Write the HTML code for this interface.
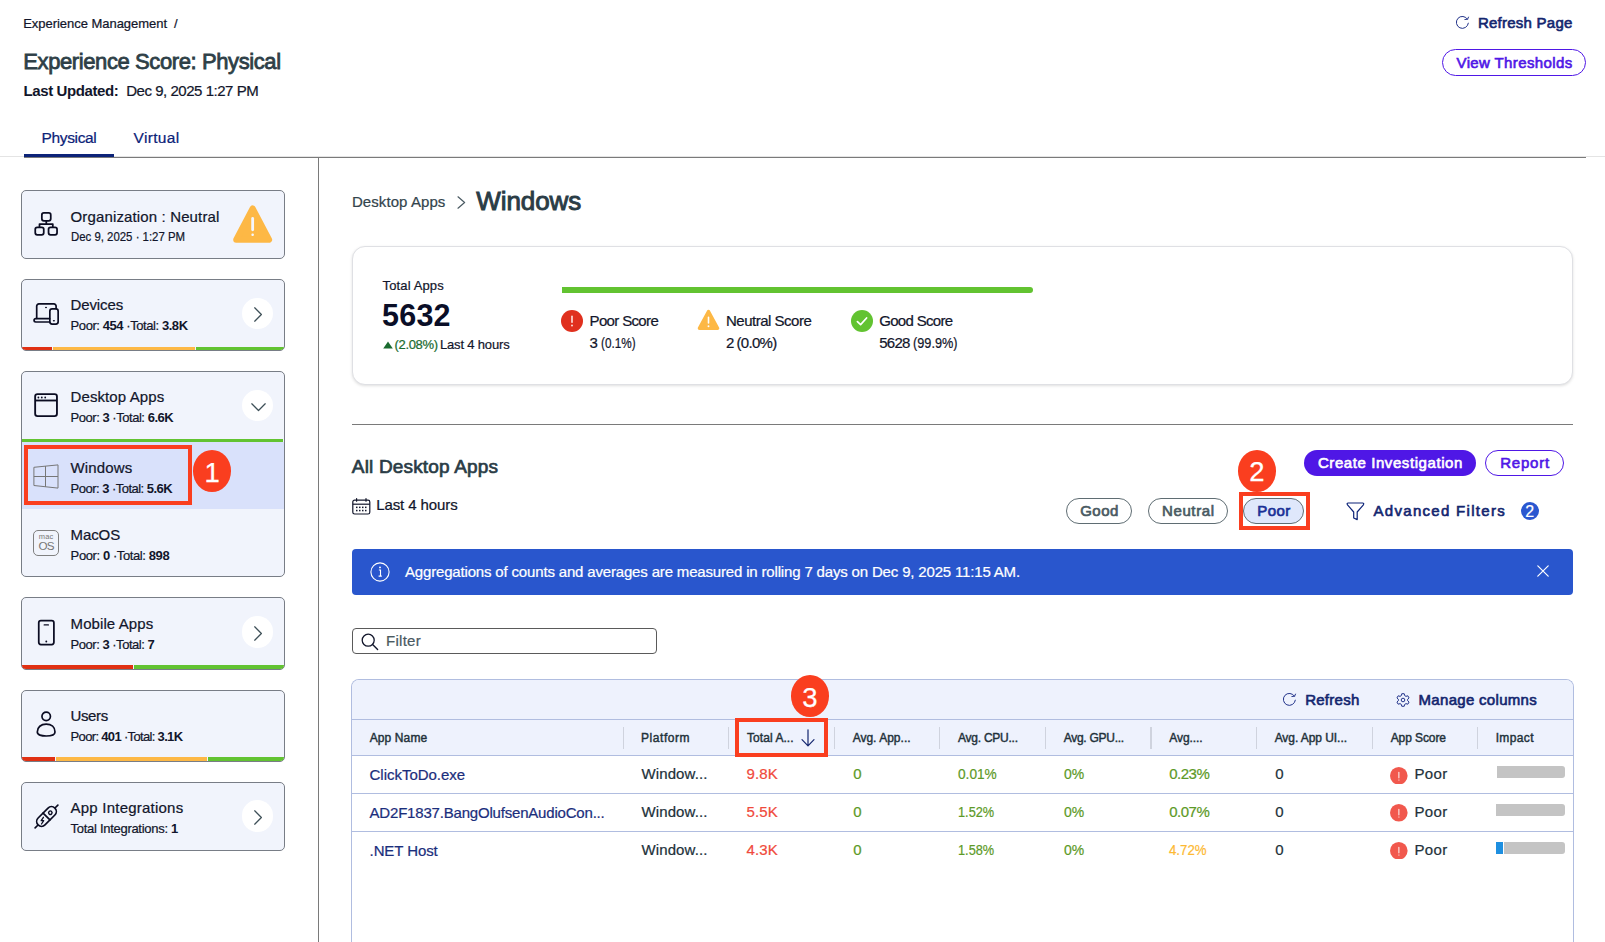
<!DOCTYPE html>
<html lang="en"><head><meta charset="utf-8"><title>Experience Score: Physical</title>
<style>
html,body{margin:0;padding:0;}
html{width:1605px;height:942px;overflow:hidden;}
body{width:1605px;height:942px;position:relative;overflow:hidden;background:#fff;font-family:"Liberation Sans", sans-serif;}
.a{position:absolute;box-sizing:border-box;}
.t{position:absolute;white-space:nowrap;line-height:1;margin:0;padding:0;}
.t b{font-weight:700;-webkit-text-stroke:0;}
</style></head><body>
<div class="a" style="left:0px;top:156px;width:1605px;height:1px;background:#e4e4e4;"></div>
<div class="a" style="left:24px;top:157px;width:1562px;height:1px;background:#7a7a7a;"></div>
<div class="a" style="left:24px;top:154px;width:90px;height:3px;background:#0c2378;"></div>
<div class="a" style="left:318px;top:157px;width:1px;height:785px;background:#7a7a7a;"></div>
<svg class="a" style="left:1455px;top:15px;" width="15" height="15" viewBox="0 0 15 15"><path d="M12.5 4.2A6 6 0 1 0 13.35 8.2" fill="none" stroke="#22338a" stroke-width="1" stroke-linecap="round"/><path d="M13.5 2.1L12.6 4.2L9.9 4.5" fill="none" stroke="#22338a" stroke-width="1" stroke-linecap="round" stroke-linejoin="round"/></svg>
<div class="a" style="left:1442px;top:49px;width:144px;height:27px;background:#fff;border:1.5px solid #4f17e6;border-radius:14px;"></div>
<div class="a" style="left:21px;top:190px;width:264px;height:69px;background:#f1f4fc;border:1px solid #787d86;border-radius:5px;overflow:hidden"></div>
<svg class="a" style="left:34px;top:212px;" width="25" height="24" viewBox="0 0 25 24"><g fill="none" stroke="#0b0c22" stroke-width="1.75" stroke-linejoin="round"><rect x="7.85" y="0.95" width="8.9" height="7.9" rx="2"/><rect x="1.25" y="15.35" width="8.5" height="7.5" rx="2"/><rect x="14.55" y="15.35" width="8.5" height="7.5" rx="2"/><path d="M12.3 8.9v3.1M5.5 15.3v-3.3h13.3v3.3"/></g></svg>
<svg class="a" style="left:233px;top:205px;" width="40" height="38.5" viewBox="0 0 40 38.5"><path d="M19.65 3.5L36.1 34.75H3.2Z" fill="#fdb845" stroke="#fdb845" stroke-width="6" stroke-linejoin="round"/><rect x="18.25" y="12" width="2.8" height="14.2" rx="1.4" fill="#f4f6fd"/><rect x="18.4" y="28.5" width="2.5" height="2.5" rx="1" fill="#f4f6fd"/></svg>
<div class="a" style="left:21px;top:279px;width:264px;height:72px;background:#f1f4fc;border:1px solid #787d86;border-radius:5px;overflow:hidden"><i style="position:absolute;left:0px;bottom:0;width:30px;height:3px;background:#e03013"></i><i style="position:absolute;left:31px;bottom:0;width:142px;height:3px;background:#fdb845"></i><i style="position:absolute;left:174px;bottom:0;width:88px;height:3px;background:#62c331"></i></div>
<svg class="a" style="left:33px;top:303px;" width="27" height="23" viewBox="0 0 27 23"><g fill="none" stroke="#0b0c22" stroke-width="1.7" stroke-linejoin="round" stroke-linecap="round"><path d="M3.7 15.3V3.1a2.2 2.2 0 0 1 2.2-2.2H20.9a2.2 2.2 0 0 1 2.2 2.2V5.4"/><path d="M16.6 15.7H2.7a1.65 1.65 0 0 0 0 3.3H16.6"/><rect x="16.85" y="5.85" width="8.3" height="15.2" rx="2.3"/></g><ellipse cx="13" cy="4.5" rx="1" ry="0.7" fill="#0b0c22"/><ellipse cx="20.9" cy="17.7" rx="1.1" ry="0.8" fill="#0b0c22"/></svg>
<div class="a" style="left:241.8px;top:297.8px;width:31.4px;height:31.4px;background:#fff;border-radius:16px;"></div>
<svg class="a" style="left:254px;top:307.0px;" width="9" height="15.4" viewBox="0 0 9 15.4"><path d="M0.7 0.8L7.4 7.5L0.7 14.2" fill="none" stroke="#3d4f57" stroke-width="1.25" stroke-linecap="round" stroke-linejoin="round"/></svg>
<div class="a" style="left:21px;top:371px;width:264px;height:206px;background:#f1f4fc;border:1px solid #787d86;border-radius:5px;overflow:hidden"></div>
<svg class="a" style="left:34px;top:393px;" width="25" height="25" viewBox="0 0 25 25"><g fill="none" stroke="#0b0c22" stroke-width="1.85" stroke-linejoin="round"><rect x="1.15" y="1.05" width="21.8" height="22.1" rx="2.4"/><path d="M1.15 7.5h21.8"/></g><circle cx="4.4" cy="4.5" r="0.9" fill="#0b0c22"/><circle cx="7.8" cy="4.5" r="0.9" fill="#0b0c22"/><circle cx="11.2" cy="4.5" r="0.9" fill="#0b0c22"/></svg>
<div class="a" style="left:241.8px;top:389.8px;width:31.4px;height:31.4px;background:#fff;border-radius:16px;"></div>
<svg class="a" style="left:250.5px;top:402.5px;" width="15" height="9" viewBox="0 0 15 9"><path d="M0.8 0.8L7.5 7.5L14.2 0.8" fill="none" stroke="#3d4f57" stroke-width="1.25" stroke-linecap="round" stroke-linejoin="round"/></svg>
<div class="a" style="left:22px;top:439px;width:261px;height:3px;background:#62c331;"></div>
<div class="a" style="left:22px;top:442px;width:262px;height:67px;background:#d9e1fb;"></div>
<svg class="a" style="left:33px;top:464px;" width="27" height="26" viewBox="0 0 27 26"><g fill="none" stroke="#777" stroke-width="1" stroke-linejoin="miter"><path d="M0.9 3.3L25 0.9V24.1L0.9 21.5Z"/><path d="M12.5 2.1V22.8M0.9 12.5H25"/></g></svg>
<div class="a" style="left:33px;top:530px;width:26px;height:26px;border:1px solid #808080;border-radius:5px;"></div>
<div class="a" style="left:21px;top:597px;width:264px;height:73px;background:#f1f4fc;border:1px solid #787d86;border-radius:5px;overflow:hidden"><i style="position:absolute;left:0px;bottom:0;width:111px;height:4px;background:#e03013"></i><i style="position:absolute;left:112px;bottom:0;width:150px;height:4px;background:#62c331"></i></div>
<svg class="a" style="left:37px;top:618.5px;" width="19" height="27" viewBox="0 0 19 27"><g fill="none" stroke="#0b0c22" stroke-width="1.75" stroke-linejoin="round" stroke-linecap="round"><rect x="1.75" y="1.6" width="15.15" height="23.9" rx="2.2"/><path d="M7.2 5.9h4.2" stroke-width="1.3"/></g><circle cx="9.3" cy="22.5" r="0.95" fill="#0b0c22"/></svg>
<div class="a" style="left:241.8px;top:616.3px;width:31.4px;height:31.4px;background:#fff;border-radius:16px;"></div>
<svg class="a" style="left:254px;top:625.5px;" width="9" height="15.4" viewBox="0 0 9 15.4"><path d="M0.7 0.8L7.4 7.5L0.7 14.2" fill="none" stroke="#3d4f57" stroke-width="1.25" stroke-linecap="round" stroke-linejoin="round"/></svg>
<div class="a" style="left:21px;top:690px;width:264px;height:72px;background:#f1f4fc;border:1px solid #787d86;border-radius:5px;overflow:hidden"><i style="position:absolute;left:0px;bottom:0;width:33px;height:4px;background:#e03013"></i><i style="position:absolute;left:34px;bottom:0;width:151px;height:4px;background:#fdb845"></i><i style="position:absolute;left:186px;bottom:0;width:76px;height:4px;background:#62c331"></i></div>
<svg class="a" style="left:35px;top:711px;" width="22" height="27" viewBox="0 0 22 27"><g fill="none" stroke="#0b0c22" stroke-width="1.7" stroke-linejoin="round"><circle cx="11.2" cy="5.3" r="4.25"/><path d="M2.3 21C2.3 16 6 13.2 11.2 13.2C16.4 13.2 20 16 20 21C20 24 16 25 11.2 25C6.4 25 2.3 24 2.3 21Z"/></g></svg>
<div class="a" style="left:21px;top:782px;width:264px;height:69px;background:#f1f4fc;border:1px solid #787d86;border-radius:5px;overflow:hidden"></div>
<svg class="a" style="left:32.8px;top:802.5px;overflow:visible;" width="27" height="27" viewBox="0 0 27 27"><g transform="rotate(-45 13.5 13.5)" fill="none" stroke="#0b0c22" stroke-width="1.7" stroke-linecap="round" stroke-linejoin="round"><rect x="1.65" y="8.65" width="23.7" height="9.7" rx="4.85"/><path d="M26.2 13.5h3.4M0.8 13.5H-2.6M13.5 8.65v9.7" /><circle cx="18.9" cy="13.5" r="1.7" stroke-width="1.4"/></g><path d="M10.4 14.3l-2.2 3.3h2.5l-2.2 3.4" fill="none" stroke="#0b0c22" stroke-width="1.3" stroke-linejoin="round" stroke-linecap="round"/></svg>
<div class="a" style="left:241.8px;top:800.3px;width:31.4px;height:31.4px;background:#fff;border-radius:16px;"></div>
<svg class="a" style="left:254px;top:809.5px;" width="9" height="15.4" viewBox="0 0 9 15.4"><path d="M0.7 0.8L7.4 7.5L0.7 14.2" fill="none" stroke="#3d4f57" stroke-width="1.25" stroke-linecap="round" stroke-linejoin="round"/></svg>
<svg class="a" style="left:457px;top:195.5px;" width="9" height="13" viewBox="0 0 9 13"><path d="M1 0.8L7.6 6.5L1 12.2" fill="none" stroke="#4a5a62" stroke-width="1.2" stroke-linecap="round" stroke-linejoin="round"/></svg>
<div class="a" style="left:352px;top:246px;width:1221px;height:139px;background:#fff;border:1px solid #dfe0e4;border-radius:13px;box-shadow:0 1px 3px rgba(0,0,0,.13);"></div>
<svg class="a" style="left:383px;top:340.5px;" width="10" height="8" viewBox="0 0 10 8"><path d="M5 0.6L9.8 7.4H0.2Z" fill="#1a6b2f"/></svg>
<div class="a" style="left:562px;top:287px;width:471px;height:6px;background:#62c331;border-radius:0 3px 3px 0;"></div>
<svg class="a" style="left:561px;top:310px;" width="22" height="22" viewBox="0 0 22 22"><circle cx="11" cy="11" r="11" fill="#e0301e"/><rect x="10.2" y="5.6" width="1.6" height="7.4" rx="0.8" fill="#fde4e0"/><circle cx="11" cy="15.5" r="0.95" fill="#fde4e0"/></svg>
<svg class="a" style="left:696.8px;top:309.3px;" width="23" height="22" viewBox="0 0 23 22"><path d="M11.5 2.6L20.6 19.2H2.4Z" fill="#fdb845" stroke="#fdb845" stroke-width="3.4" stroke-linejoin="round"/><rect x="10.7" y="7.6" width="1.6" height="7.2" rx="0.8" fill="#fff"/><circle cx="11.5" cy="17.2" r="0.95" fill="#fff"/></svg>
<svg class="a" style="left:851px;top:310px;" width="22" height="22" viewBox="0 0 22 22"><circle cx="11" cy="11" r="11" fill="#62c331"/><path d="M6.4 11.6L9.6 14.6L15.6 8" fill="none" stroke="#fff" stroke-width="1.7" stroke-linecap="round" stroke-linejoin="round"/></svg>
<div class="a" style="left:352px;top:424px;width:1221px;height:1px;background:#7a7a7a;"></div>
<div class="a" style="left:1304px;top:450px;width:172px;height:26px;background:#4f17e6;border-radius:13px;"></div>
<div class="a" style="left:1485px;top:450px;width:79px;height:26px;background:#fff;border:1.5px solid #4f17e6;border-radius:13px;"></div>
<svg class="a" style="left:352px;top:497.5px;" width="19" height="17" viewBox="0 0 19 17"><g fill="none" stroke="#12162b" stroke-width="1.2" stroke-linejoin="round"><rect x="0.8" y="2.2" width="17" height="13.8" rx="1.8"/><path d="M0.8 6.2h17"/><path d="M4.6 0.6v2.6M14 0.6v2.6" stroke-linecap="round"/></g><g fill="#12162b"><rect x="4" y="8.6" width="1.5" height="1.5"/><rect x="7" y="8.6" width="1.5" height="1.5"/><rect x="10" y="8.6" width="1.5" height="1.5"/><rect x="13" y="8.6" width="1.5" height="1.5"/><rect x="4" y="11.8" width="1.5" height="1.5"/><rect x="7" y="11.8" width="1.5" height="1.5"/><rect x="10" y="11.8" width="1.5" height="1.5"/><rect x="13" y="11.8" width="1.5" height="1.5"/></g></svg>
<div class="a" style="left:1066px;top:498px;width:66px;height:26px;background:#fff;border:1px solid #5f6d73;border-radius:13px;"></div>
<div class="a" style="left:1148px;top:498px;width:80px;height:26px;background:#fff;border:1px solid #5f6d73;border-radius:13px;"></div>
<div class="a" style="left:1243px;top:498px;width:61px;height:26px;background:#dfe7fb;border:1px solid #5f6d73;border-radius:13px;"></div>
<svg class="a" style="left:1345.5px;top:501.5px;" width="19" height="19" viewBox="0 0 19 19"><path d="M2.2 1H16.6Q18.3 1 17.4 2.8L11.2 10V17.6L7.7 16V10L1.5 2.8Q0.5 1 2.2 1Z" fill="none" stroke="#0c2378" stroke-width="1.2" stroke-linejoin="round"/></svg>
<div class="a" style="left:1521px;top:502px;width:18px;height:18px;background:#2a57d0;border-radius:9px;"></div>
<div class="a" style="left:352px;top:549px;width:1221px;height:46px;background:#2956cd;border-radius:4px;"></div>
<svg class="a" style="left:369.5px;top:562px;" width="20" height="20" viewBox="0 0 20 20"><circle cx="10" cy="10" r="9.1" fill="none" stroke="#fff" stroke-width="1.1"/><path d="M8.9 8h1.6v6M8.6 14.1h3.2" fill="none" stroke="#fff" stroke-width="1.1"/><circle cx="10" cy="5.4" r="0.95" fill="#fff"/></svg>
<svg class="a" style="left:1537px;top:565px;" width="12" height="12" viewBox="0 0 12 12"><path d="M0.8 0.8L11.2 11.2M11.2 0.8L0.8 11.2" stroke="#fff" stroke-width="1.2" stroke-linecap="round"/></svg>
<div class="a" style="left:352px;top:628px;width:305px;height:26px;background:#fff;border:1px solid #5a5a5a;border-radius:4px;"></div>
<svg class="a" style="left:361px;top:632.5px;" width="18" height="18" viewBox="0 0 18 18"><circle cx="7.2" cy="7.2" r="6" fill="none" stroke="#12162b" stroke-width="1.3"/><path d="M11.6 11.6L16.6 16.4" stroke="#12162b" stroke-width="1.4" stroke-linecap="round"/></svg>
<div class="a" style="left:351px;top:679px;width:1223px;height:263px;background:#fff;border:1px solid #b0bde0;border-radius:8px 8px 0 0;border-bottom:none;"></div>
<div class="a" style="left:352px;top:680px;width:1221px;height:76px;background:#eef2fd;border-radius:7px 7px 0 0;"></div>
<div class="a" style="left:352px;top:719px;width:1221px;height:1px;background:#b0bde0;"></div>
<div class="a" style="left:352px;top:755px;width:1221px;height:1px;background:#b0bde0;"></div>
<div class="a" style="left:352px;top:793px;width:1221px;height:1px;background:#b0bde0;"></div>
<div class="a" style="left:352px;top:831px;width:1221px;height:1px;background:#b0bde0;"></div>
<div class="a" style="left:623px;top:727px;width:1px;height:22px;background:#cfd3de;"></div>
<div class="a" style="left:728px;top:727px;width:1px;height:22px;background:#cfd3de;"></div>
<div class="a" style="left:834px;top:727px;width:1px;height:22px;background:#cfd3de;"></div>
<div class="a" style="left:939px;top:727px;width:1px;height:22px;background:#cfd3de;"></div>
<div class="a" style="left:1045px;top:727px;width:1px;height:22px;background:#cfd3de;"></div>
<div class="a" style="left:1150px;top:727px;width:2px;height:22px;background:#cfd3de;"></div>
<div class="a" style="left:1256px;top:727px;width:1px;height:22px;background:#cfd3de;"></div>
<div class="a" style="left:1372px;top:727px;width:1px;height:22px;background:#cfd3de;"></div>
<div class="a" style="left:1477px;top:727px;width:1px;height:22px;background:#cfd3de;"></div>
<svg class="a" style="left:1282.1px;top:692px;" width="15" height="15" viewBox="0 0 15 15"><path d="M12.5 4.2A6 6 0 1 0 13.35 8.2" fill="none" stroke="#22338a" stroke-width="1" stroke-linecap="round"/><path d="M13.5 2.1L12.6 4.2L9.9 4.5" fill="none" stroke="#22338a" stroke-width="1" stroke-linecap="round" stroke-linejoin="round"/></svg>
<svg class="a" style="left:1395.5px;top:692.5px;" width="14" height="14" viewBox="0 0 14 14"><g fill="none" stroke="#22338a" stroke-width="1" stroke-linejoin="round"><path d="M8.68 2.61L8.22 0.72L5.78 0.72L5.32 2.61L4.04 3.35L2.17 2.80L0.95 4.92L2.36 6.26L2.36 7.74L0.95 9.08L2.17 11.20L4.04 10.65L5.32 11.39L5.78 13.28L8.22 13.28L8.68 11.39L9.96 10.65L11.83 11.20L13.05 9.08L11.64 7.74L11.64 6.26L13.05 4.92L11.83 2.80L9.96 3.35Z"/><circle cx="7" cy="7" r="1.8"/></g></svg>
<svg class="a" style="left:801px;top:729px;" width="14" height="18" viewBox="0 0 14 18"><path d="M7 0.8V16.6M1 10.6L7 16.8L13 10.6" fill="none" stroke="#13266f" stroke-width="1.2" stroke-linecap="round" stroke-linejoin="round"/></svg>
<svg class="a" style="left:1390px;top:766.7px;" width="17.6" height="17.6" viewBox="0 0 17.6 17.6"><circle cx="8.8" cy="8.8" r="8.8" fill="#f1584d"/><rect x="8.2" y="4.8" width="1.3" height="6.6" rx="0.65" fill="#fff" fill-opacity="0.75"/><rect x="8.1" y="12.4" width="1.5" height="1.1" rx="0.5" fill="#fff" fill-opacity="0.75"/></svg>
<div class="a" style="left:1497px;top:766px;width:68px;height:12px;background:#c4c4c4;border-radius:0 3px 3px 0;"></div>
<svg class="a" style="left:1390px;top:804.1px;" width="17.6" height="17.6" viewBox="0 0 17.6 17.6"><circle cx="8.8" cy="8.8" r="8.8" fill="#f1584d"/><rect x="8.2" y="4.8" width="1.3" height="6.6" rx="0.65" fill="#fff" fill-opacity="0.75"/><rect x="8.1" y="12.4" width="1.5" height="1.1" rx="0.5" fill="#fff" fill-opacity="0.75"/></svg>
<div class="a" style="left:1496px;top:804px;width:69px;height:12px;background:#c4c4c4;border-radius:0 3px 3px 0;"></div>
<svg class="a" style="left:1390px;top:841.9000000000001px;" width="17.6" height="17.6" viewBox="0 0 17.6 17.6"><circle cx="8.8" cy="8.8" r="8.8" fill="#f1584d"/><rect x="8.2" y="4.8" width="1.3" height="6.6" rx="0.65" fill="#fff" fill-opacity="0.75"/><rect x="8.1" y="12.4" width="1.5" height="1.1" rx="0.5" fill="#fff" fill-opacity="0.75"/></svg>
<div class="a" style="left:1496px;top:842px;width:69px;height:12px;background:#c4c4c4;border-radius:0 3px 3px 0;"></div>
<div class="a" style="left:1496px;top:842px;width:7px;height:12px;background:#1e8fe0;"></div>
<div class="a" style="left:1503px;top:842px;width:1px;height:12px;background:#fff;"></div>
<span class="t" style="left:23.21px;top:17.00px;font-size:13px;font-weight:400;-webkit-text-stroke:0.22px #12162b;color:#12162b;letter-spacing:-0.035px;">Experience Management</span>
<span class="t" style="left:174.11px;top:17.00px;font-size:13px;font-weight:400;-webkit-text-stroke:0.22px #12162b;color:#12162b;">/</span>
<span class="t" style="left:23.34px;top:51.38px;font-size:22px;font-weight:400;-webkit-text-stroke:0.79px #2e3f47;color:#2e3f47;letter-spacing:-0.401px;">Experience Score: Physical</span>
<span class="t" style="left:23.55px;top:83.30px;font-size:15px;font-weight:700;color:#12162b;letter-spacing:-0.401px;">Last Updated:</span>
<span class="t" style="left:126.15px;top:83.30px;font-size:15px;font-weight:400;-webkit-text-stroke:0.22px #12162b;color:#12162b;letter-spacing:-0.462px;">Dec 9, 2025 1:27 PM</span>
<span class="t" style="left:41.53px;top:129.88px;font-size:15.5px;font-weight:400;-webkit-text-stroke:0.22px #0c2378;color:#0c2378;letter-spacing:-0.354px;">Physical</span>
<span class="t" style="left:133.53px;top:129.88px;font-size:15.5px;font-weight:400;-webkit-text-stroke:0.22px #0c2378;color:#0c2378;letter-spacing:0.331px;">Virtual</span>
<span class="t" style="left:1477.95px;top:15.30px;font-size:15px;font-weight:400;-webkit-text-stroke:0.63px #13266f;color:#13266f;letter-spacing:0.242px;">Refresh Page</span>
<span class="t" style="left:1456.55px;top:55.30px;font-size:15px;font-weight:400;-webkit-text-stroke:0.63px #4f17e6;color:#4f17e6;letter-spacing:0.375px;">View Thresholds</span>
<span class="t" style="left:70.55px;top:209.30px;font-size:15px;font-weight:400;-webkit-text-stroke:0.22px #12162b;color:#12162b;letter-spacing:0.138px;">Organization : Neutral</span>
<span class="t" style="left:70.61px;top:230.00px;font-size:13px;font-weight:400;-webkit-text-stroke:0.22px #12162b;color:#12162b;transform:scaleX(0.8767);transform-origin:0 0;">Dec 9, 2025 &#183; 1:27 PM</span>
<span class="t" style="left:70.55px;top:297.30px;font-size:15px;font-weight:400;-webkit-text-stroke:0.22px #12162b;color:#12162b;letter-spacing:-0.127px;">Devices</span>
<span class="t" style="left:70.61px;top:319.00px;font-size:13px;font-weight:400;-webkit-text-stroke:0.22px #12162b;color:#12162b;letter-spacing:-0.431px;">Poor: <b>454</b> &#183;Total: <b>3.8K</b></span>
<span class="t" style="left:70.55px;top:389.10px;font-size:15px;font-weight:400;-webkit-text-stroke:0.22px #12162b;color:#12162b;letter-spacing:0.094px;">Desktop Apps</span>
<span class="t" style="left:70.61px;top:411.00px;font-size:13px;font-weight:400;-webkit-text-stroke:0.22px #12162b;color:#12162b;letter-spacing:-0.472px;">Poor: <b>3</b> &#183;Total: <b>6.6K</b></span>
<span class="t" style="left:70.55px;top:460.30px;font-size:15px;font-weight:400;-webkit-text-stroke:0.22px #12162b;color:#12162b;letter-spacing:0.157px;">Windows</span>
<span class="t" style="left:70.61px;top:482.00px;font-size:13px;font-weight:400;-webkit-text-stroke:0.22px #12162b;color:#12162b;letter-spacing:-0.525px;">Poor: <b>3</b> &#183;Total: <b>5.6K</b></span>
<span class="t" style="left:38.77px;top:533.25px;font-size:7.5px;font-weight:400;color:#777;letter-spacing:0.214px;">mac</span>
<span class="t" style="left:38.45px;top:540.10px;font-size:11.7px;font-weight:400;color:#777;letter-spacing:-0.755px;">OS</span>
<span class="t" style="left:70.55px;top:526.90px;font-size:15px;font-weight:400;-webkit-text-stroke:0.22px #12162b;color:#12162b;letter-spacing:-0.104px;">MacOS</span>
<span class="t" style="left:70.61px;top:549.00px;font-size:13px;font-weight:400;-webkit-text-stroke:0.22px #12162b;color:#12162b;letter-spacing:-0.401px;">Poor: <b>0</b> &#183;Total: <b>898</b></span>
<span class="t" style="left:70.55px;top:616.30px;font-size:15px;font-weight:400;-webkit-text-stroke:0.22px #12162b;color:#12162b;letter-spacing:0.088px;">Mobile Apps</span>
<span class="t" style="left:70.61px;top:638.00px;font-size:13px;font-weight:400;-webkit-text-stroke:0.22px #12162b;color:#12162b;letter-spacing:-0.484px;">Poor: <b>3</b> &#183;Total: <b>7</b></span>
<span class="t" style="left:70.55px;top:708.30px;font-size:15px;font-weight:400;-webkit-text-stroke:0.22px #12162b;color:#12162b;letter-spacing:-0.393px;">Users</span>
<span class="t" style="left:70.61px;top:730.00px;font-size:13px;font-weight:400;-webkit-text-stroke:0.22px #12162b;color:#12162b;letter-spacing:-0.669px;">Poor: <b>401</b> &#183;Total: <b>3.1K</b></span>
<span class="t" style="left:70.55px;top:800.30px;font-size:15px;font-weight:400;-webkit-text-stroke:0.22px #12162b;color:#12162b;letter-spacing:0.223px;">App Integrations</span>
<span class="t" style="left:70.61px;top:822.00px;font-size:13px;font-weight:400;-webkit-text-stroke:0.22px #12162b;color:#12162b;letter-spacing:-0.291px;">Total Integrations: <b>1</b></span>
<span class="t" style="left:351.95px;top:194.30px;font-size:15px;font-weight:400;-webkit-text-stroke:0.22px #33444c;color:#33444c;letter-spacing:0.076px;">Desktop Apps</span>
<span class="t" style="left:476.22px;top:187.59px;font-size:26px;font-weight:400;-webkit-text-stroke:0.94px #2a3c46;color:#2a3c46;letter-spacing:-0.067px;">Windows</span>
<span class="t" style="left:382.61px;top:279.00px;font-size:13px;font-weight:400;-webkit-text-stroke:0.22px #12162b;color:#12162b;letter-spacing:0.116px;">Total Apps</span>
<span class="t" style="left:382.08px;top:299.78px;font-size:30.5px;font-weight:700;color:#0a0e27;letter-spacing:0.194px;">5632</span>
<span class="t" style="left:394.61px;top:337.60px;font-size:13px;font-weight:400;-webkit-text-stroke:0.22px #1a6b2f;color:#1a6b2f;letter-spacing:-0.349px;">(2.08%)</span>
<span class="t" style="left:440.01px;top:337.60px;font-size:13px;font-weight:400;-webkit-text-stroke:0.22px #12162b;color:#12162b;letter-spacing:-0.173px;">Last 4 hours</span>
<span class="t" style="left:589.55px;top:313.30px;font-size:15px;font-weight:400;-webkit-text-stroke:0.22px #12162b;color:#12162b;letter-spacing:-0.650px;">Poor Score</span>
<span class="t" style="left:589.55px;top:335.30px;font-size:15px;font-weight:400;-webkit-text-stroke:0.22px #12162b;color:#12162b;">3</span>
<span class="t" style="left:600.55px;top:335.30px;font-size:15px;font-weight:400;-webkit-text-stroke:0.22px #12162b;color:#12162b;transform:scaleX(0.7830);transform-origin:0 0;">(0.1%)</span>
<span class="t" style="left:725.95px;top:313.30px;font-size:15px;font-weight:400;-webkit-text-stroke:0.22px #12162b;color:#12162b;letter-spacing:-0.493px;">Neutral Score</span>
<span class="t" style="left:725.95px;top:335.30px;font-size:15px;font-weight:400;-webkit-text-stroke:0.22px #12162b;color:#12162b;">2</span>
<span class="t" style="left:736.55px;top:335.30px;font-size:15px;font-weight:400;-webkit-text-stroke:0.22px #12162b;color:#12162b;letter-spacing:-0.717px;">(0.0%)</span>
<span class="t" style="left:879.15px;top:313.30px;font-size:15px;font-weight:400;-webkit-text-stroke:0.22px #12162b;color:#12162b;letter-spacing:-0.672px;">Good Score</span>
<span class="t" style="left:879.15px;top:335.30px;font-size:15px;font-weight:400;-webkit-text-stroke:0.22px #12162b;color:#12162b;letter-spacing:-0.725px;">5628</span>
<span class="t" style="left:913.15px;top:335.30px;font-size:15px;font-weight:400;-webkit-text-stroke:0.22px #12162b;color:#12162b;transform:scaleX(0.8490);transform-origin:0 0;">(99.9%)</span>
<span class="t" style="left:351.83px;top:456.92px;font-size:19px;font-weight:400;-webkit-text-stroke:0.68px #2a3c46;color:#2a3c46;letter-spacing:0.165px;">All Desktop Apps</span>
<span class="t" style="left:1317.95px;top:455.30px;font-size:15px;font-weight:400;-webkit-text-stroke:0.63px #fff;color:#fff;letter-spacing:0.578px;">Create Investigation</span>
<span class="t" style="left:1500.15px;top:455.30px;font-size:15px;font-weight:400;-webkit-text-stroke:0.63px #4f17e6;color:#4f17e6;letter-spacing:0.794px;">Report</span>
<span class="t" style="left:376.15px;top:497.30px;font-size:15px;font-weight:400;-webkit-text-stroke:0.22px #12162b;color:#12162b;letter-spacing:-0.087px;">Last 4 hours</span>
<span class="t" style="left:1080.15px;top:503.30px;font-size:15px;font-weight:400;-webkit-text-stroke:0.67px #4a5a62;color:#4a5a62;letter-spacing:0.499px;">Good</span>
<span class="t" style="left:1161.95px;top:503.30px;font-size:15px;font-weight:400;-webkit-text-stroke:0.67px #4a5a62;color:#4a5a62;letter-spacing:0.640px;">Neutral</span>
<span class="t" style="left:1257.15px;top:503.30px;font-size:15px;font-weight:400;-webkit-text-stroke:0.67px #1a2f96;color:#1a2f96;letter-spacing:0.504px;">Poor</span>
<span class="t" style="left:1373.55px;top:503.30px;font-size:15px;font-weight:400;-webkit-text-stroke:0.63px #13266f;color:#13266f;letter-spacing:1.299px;">Advanced Filters</span>
<span class="t" style="left:1525.22px;top:503.66px;font-size:16px;font-weight:400;-webkit-text-stroke:0.22px #fff;color:#fff;">2</span>
<span class="t" style="left:404.95px;top:564.30px;font-size:15px;font-weight:400;-webkit-text-stroke:0.22px #fff;color:#fff;letter-spacing:-0.166px;">Aggregations of counts and averages are measured in rolling 7 days on Dec 9, 2025 11:15 AM.</span>
<span class="t" style="left:385.95px;top:633.30px;font-size:15px;font-weight:400;-webkit-text-stroke:0.22px #4a5a62;color:#4a5a62;letter-spacing:0.291px;">Filter</span>
<span class="t" style="left:1305.15px;top:692.30px;font-size:15px;font-weight:400;-webkit-text-stroke:0.63px #13266f;color:#13266f;letter-spacing:0.278px;">Refresh</span>
<span class="t" style="left:1418.55px;top:692.30px;font-size:15px;font-weight:400;-webkit-text-stroke:0.63px #13266f;color:#13266f;letter-spacing:0.305px;">Manage columns</span>
<span class="t" style="left:369.64px;top:732.24px;font-size:12px;font-weight:400;-webkit-text-stroke:0.42px #22313a;color:#22313a;letter-spacing:0.122px;">App Name</span>
<span class="t" style="left:641.04px;top:732.24px;font-size:12px;font-weight:400;-webkit-text-stroke:0.42px #22313a;color:#22313a;letter-spacing:0.553px;">Platform</span>
<span class="t" style="left:747.04px;top:732.24px;font-size:12px;font-weight:400;-webkit-text-stroke:0.42px #22313a;color:#22313a;letter-spacing:0.059px;">Total A...</span>
<span class="t" style="left:852.64px;top:732.24px;font-size:12px;font-weight:400;-webkit-text-stroke:0.42px #22313a;color:#22313a;letter-spacing:0.013px;">Avg. App...</span>
<span class="t" style="left:958.04px;top:732.24px;font-size:12px;font-weight:400;-webkit-text-stroke:0.42px #22313a;color:#22313a;letter-spacing:-0.251px;">Avg. CPU...</span>
<span class="t" style="left:1063.64px;top:732.24px;font-size:12px;font-weight:400;-webkit-text-stroke:0.42px #22313a;color:#22313a;letter-spacing:-0.258px;">Avg. GPU...</span>
<span class="t" style="left:1169.24px;top:732.24px;font-size:12px;font-weight:400;-webkit-text-stroke:0.42px #22313a;color:#22313a;letter-spacing:-0.073px;">Avg....</span>
<span class="t" style="left:1274.64px;top:732.24px;font-size:12px;font-weight:400;-webkit-text-stroke:0.42px #22313a;color:#22313a;letter-spacing:-0.061px;">Avg. App UI...</span>
<span class="t" style="left:1390.64px;top:732.24px;font-size:12px;font-weight:400;-webkit-text-stroke:0.42px #22313a;color:#22313a;letter-spacing:-0.086px;">App Score</span>
<span class="t" style="left:1495.64px;top:732.24px;font-size:12px;font-weight:400;-webkit-text-stroke:0.42px #22313a;color:#22313a;letter-spacing:0.389px;">Impact</span>
<span class="t" style="left:369.55px;top:767.00px;font-size:15px;font-weight:400;-webkit-text-stroke:0.22px #1b2e7c;color:#1b2e7c;letter-spacing:-0.023px;">ClickToDo.exe</span>
<span class="t" style="left:641.55px;top:766.00px;font-size:15px;font-weight:400;-webkit-text-stroke:0.22px #22313a;color:#22313a;letter-spacing:0.096px;">Window...</span>
<span class="t" style="left:746.55px;top:766.00px;font-size:15px;font-weight:400;-webkit-text-stroke:0.22px #f04a3c;color:#f04a3c;letter-spacing:0.114px;">9.8K</span>
<span class="t" style="left:853.25px;top:766.00px;font-size:15px;font-weight:400;-webkit-text-stroke:0.22px #5d9a27;color:#5d9a27;">0</span>
<span class="t" style="left:957.95px;top:766.00px;font-size:15px;font-weight:400;-webkit-text-stroke:0.22px #5d9a27;color:#5d9a27;transform:scaleX(0.9119);transform-origin:0 0;">0.01%</span>
<span class="t" style="left:1063.55px;top:766.00px;font-size:15px;font-weight:400;-webkit-text-stroke:0.22px #5d9a27;color:#5d9a27;transform:scaleX(0.9314);transform-origin:0 0;">0%</span>
<span class="t" style="left:1169.15px;top:766.00px;font-size:15px;font-weight:400;-webkit-text-stroke:0.22px #5d9a27;color:#5d9a27;letter-spacing:-0.487px;">0.23%</span>
<span class="t" style="left:1275.25px;top:766.00px;font-size:15px;font-weight:400;-webkit-text-stroke:0.22px #22313a;color:#22313a;">0</span>
<span class="t" style="left:1414.55px;top:766.00px;font-size:15px;font-weight:400;-webkit-text-stroke:0.22px #22313a;color:#22313a;letter-spacing:0.304px;">Poor</span>
<span class="t" style="left:369.55px;top:805.00px;font-size:15px;font-weight:400;-webkit-text-stroke:0.22px #1b2e7c;color:#1b2e7c;letter-spacing:-0.193px;">AD2F1837.BangOlufsenAudioCon...</span>
<span class="t" style="left:641.55px;top:804.00px;font-size:15px;font-weight:400;-webkit-text-stroke:0.22px #22313a;color:#22313a;letter-spacing:0.096px;">Window...</span>
<span class="t" style="left:746.55px;top:804.00px;font-size:15px;font-weight:400;-webkit-text-stroke:0.22px #f04a3c;color:#f04a3c;letter-spacing:0.114px;">5.5K</span>
<span class="t" style="left:853.25px;top:804.00px;font-size:15px;font-weight:400;-webkit-text-stroke:0.22px #5d9a27;color:#5d9a27;">0</span>
<span class="t" style="left:957.95px;top:804.00px;font-size:15px;font-weight:400;-webkit-text-stroke:0.22px #5d9a27;color:#5d9a27;transform:scaleX(0.8508);transform-origin:0 0;">1.52%</span>
<span class="t" style="left:1063.55px;top:804.00px;font-size:15px;font-weight:400;-webkit-text-stroke:0.22px #5d9a27;color:#5d9a27;transform:scaleX(0.9314);transform-origin:0 0;">0%</span>
<span class="t" style="left:1169.15px;top:804.00px;font-size:15px;font-weight:400;-webkit-text-stroke:0.22px #5d9a27;color:#5d9a27;letter-spacing:-0.487px;">0.07%</span>
<span class="t" style="left:1275.25px;top:804.00px;font-size:15px;font-weight:400;-webkit-text-stroke:0.22px #22313a;color:#22313a;">0</span>
<span class="t" style="left:1414.55px;top:804.00px;font-size:15px;font-weight:400;-webkit-text-stroke:0.22px #22313a;color:#22313a;letter-spacing:0.304px;">Poor</span>
<span class="t" style="left:369.55px;top:843.00px;font-size:15px;font-weight:400;-webkit-text-stroke:0.22px #1b2e7c;color:#1b2e7c;letter-spacing:-0.088px;">.NET Host</span>
<span class="t" style="left:641.55px;top:842.00px;font-size:15px;font-weight:400;-webkit-text-stroke:0.22px #22313a;color:#22313a;letter-spacing:0.096px;">Window...</span>
<span class="t" style="left:746.55px;top:842.00px;font-size:15px;font-weight:400;-webkit-text-stroke:0.22px #f04a3c;color:#f04a3c;letter-spacing:0.114px;">4.3K</span>
<span class="t" style="left:853.25px;top:842.00px;font-size:15px;font-weight:400;-webkit-text-stroke:0.22px #5d9a27;color:#5d9a27;">0</span>
<span class="t" style="left:957.95px;top:842.00px;font-size:15px;font-weight:400;-webkit-text-stroke:0.22px #5d9a27;color:#5d9a27;transform:scaleX(0.8508);transform-origin:0 0;">1.58%</span>
<span class="t" style="left:1063.55px;top:842.00px;font-size:15px;font-weight:400;-webkit-text-stroke:0.22px #5d9a27;color:#5d9a27;transform:scaleX(0.9314);transform-origin:0 0;">0%</span>
<span class="t" style="left:1169.15px;top:842.00px;font-size:15px;font-weight:400;-webkit-text-stroke:0.22px #fdb933;color:#fdb933;transform:scaleX(0.8837);transform-origin:0 0;">4.72%</span>
<span class="t" style="left:1275.25px;top:842.00px;font-size:15px;font-weight:400;-webkit-text-stroke:0.22px #22313a;color:#22313a;">0</span>
<span class="t" style="left:1414.55px;top:842.00px;font-size:15px;font-weight:400;-webkit-text-stroke:0.22px #22313a;color:#22313a;letter-spacing:0.304px;">Poor</span>
<div class="a" style="left:24px;top:445px;width:168px;height:60px;border:4px solid #fa3e1f;"></div>
<div class="a" style="left:192.79999999999998px;top:449.9px;width:38.6px;height:42px;background:#fa3e1f;border-radius:50%;"></div>
<span class="t" style="left:192.8px;top:458.6px;width:38.6px;text-align:center;font-size:27.5px;color:#fff;-webkit-text-stroke:0.25px #fff;">1</span>
<div class="a" style="left:1239px;top:492px;width:71px;height:38px;border:4px solid #fa3e1f;"></div>
<div class="a" style="left:1237.7px;top:449.5px;width:38.6px;height:42px;background:#fa3e1f;border-radius:50%;"></div>
<span class="t" style="left:1237.7px;top:458.2px;width:38.6px;text-align:center;font-size:27.5px;color:#fff;-webkit-text-stroke:0.25px #fff;">2</span>
<div class="a" style="left:735px;top:718px;width:93px;height:39px;border:4px solid #fa3e1f;"></div>
<div class="a" style="left:790.7px;top:674.9px;width:38.6px;height:42px;background:#fa3e1f;border-radius:50%;"></div>
<span class="t" style="left:790.7px;top:683.6px;width:38.6px;text-align:center;font-size:27.5px;color:#fff;-webkit-text-stroke:0.25px #fff;">3</span>
</body></html>
